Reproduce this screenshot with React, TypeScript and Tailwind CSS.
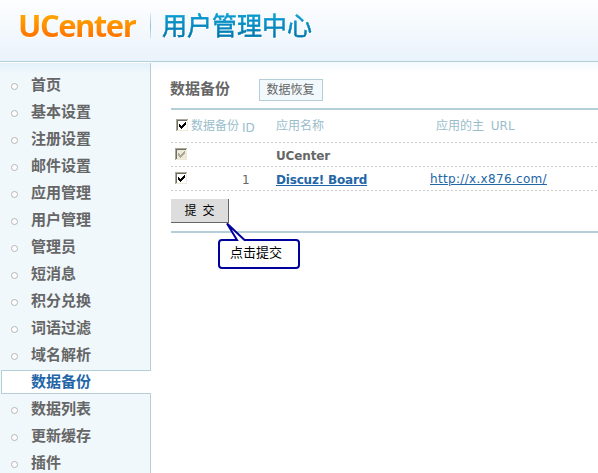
import React from "react";

const MENU = ["首页", "基本设置", "注册设置", "邮件设置", "应用管理", "用户管理", "管理员", "短消息", "积分兑换", "词语过滤", "域名解析", "数据备份", "数据列表", "更新缓存", "插件"];
const ACTIVE = "数据备份";

function Check({ disabled = false }: { disabled?: boolean }) {
  const fill = disabled ? "#ece9d8" : "#fff";
  const mark = disabled ? "#aca899" : "#000";
  return (
    <svg width="13" height="13" viewBox="0 0 13 13" shapeRendering="crispEdges" className="block shrink-0">
      <rect width="13" height="13" fill="#fff" />
      <rect width="12" height="12" fill="#aca899" />
      <rect x="1" y="1" width="11" height="11" fill="#ece9d8" />
      <rect x="1" y="1" width="10" height="10" fill="#716f64" />
      <rect x="2" y="2" width="9" height="9" fill={fill} />
      <path fill={mark} d="M3 5h1v3h-1zM4 6h1v3h-1zM5 7h1v3h-1zM6 6h1v3h-1zM7 5h1v3h-1zM8 4h1v3h-1zM9 3h1v3h-1z" />
    </svg>
  );
}

function Dashes() {
  return <div className="h-px w-full shrink-0 bg-[repeating-linear-gradient(90deg,#ccc_0_2px,transparent_2px_4px)]" />;
}

function Header() {
  return (
    <header className="flex h-[62px] shrink-0 border-b border-[#b5cfd9] bg-linear-to-b from-[#fdfeff] to-[#eaf3fb] pl-[18px]">
      <div className="h-[52px] w-[132px] pt-[5px] font-['Open_Sans',sans-serif] text-[31px] leading-[40px] font-bold tracking-[-1.5px] whitespace-nowrap text-transparent">
        <span className="inline-block bg-linear-to-b from-[#ffa200] from-30% to-[#ff7800] to-75% bg-clip-text pr-1 drop-shadow-[1px_1px_0_#fff]">UCenter</span>
      </div>
      <div className="mt-[13px] h-[26px] w-px bg-linear-to-b from-[#d9ebf3] via-[#8fc3dc] to-[#d9ebf3]" />
      <div className="ml-[11px] pt-[4px] font-['Noto_Sans_CJK_SC',sans-serif] text-[25px] leading-[40px] whitespace-nowrap text-transparent">
        <span className="inline-block bg-linear-to-b from-[#06a5d8] from-25% to-[#0673ab] to-80% bg-clip-text drop-shadow-[1px_1px_0_#fff] [-webkit-text-stroke:0.3px_#0688be]">用户管理中心</span>
      </div>
    </header>
  );
}

function Sidebar() {
  return (
    <nav className="flex w-[151px] shrink-0 flex-col gap-[3px] bg-[#f0f8fc] bg-[linear-gradient(#e3f0fa,#f0f8fc_12px)] pt-[11px] shadow-[inset_0_1px_#fff,inset_-1px_0_#b5cfd9]">
      {MENU.map((name) =>
        name === ACTIVE ? (
          <div key={name} className="ml-px flex h-6 shrink-0 items-center border border-r-0 border-[#b5cfd9] bg-white pl-[29px] text-[15px] leading-[20px] font-bold text-[#2366a8]">
            {name}
          </div>
        ) : (
          <div key={name} className="flex h-6 shrink-0 items-center pl-[11px] text-[15px] leading-[20px] font-bold text-[#666]">
            <i className="mt-[3px] mr-[13px] size-[7px] rounded-full border border-[#b4b4b4] bg-white" />
            {name}
          </div>
        ),
      )}
    </nav>
  );
}

const COLS = "grid shrink-0 grid-cols-[71px_34px_154px_168px] items-center";

export default function App() {
  return (
    <div className="flex h-[473px] w-[598px] flex-col overflow-hidden bg-white font-['DejaVu_Sans','Noto_Sans_CJK_SC',sans-serif] text-[12px] text-[#666]">
      <Header />
      <div className="flex min-h-0 flex-1">
        <Sidebar />
        <main className="relative flex min-w-0 flex-1 flex-col bg-[linear-gradient(#f4fafd,#fff_12px)] pl-5">
          <div className="flex h-[46px] shrink-0 items-start pt-[17px]">
            <h3 className="w-[88px] text-[15px] leading-[20px] font-bold"><span className="-ml-px">数据备份</span></h3>
            <button className="h-[22px] w-16 border border-[#b5cfd9] bg-[#f2f9fd] pr-px text-[12px] leading-[19px]">数据恢复</button>
          </div>
          <div className="h-[2px] shrink-0 bg-[#b5cfd9]" />
          <div className={`${COLS} h-8 text-[#9abdcb]`}>
            <div className="flex items-center pl-[5px] whitespace-nowrap"><span className="-mt-[2px]"><Check /></span><span className="ml-[2px]">数据备份</span></div>
            <div className="pt-1">ID</div>
            <div>应用名称</div>
            <div className="pl-[6px] whitespace-pre">应用的主 <span className="ml-[3px]">URL</span></div>
          </div>
          <Dashes />
          <div className={`${COLS} h-[23px]`}>
            <div className="pl-1"><Check disabled /></div>
            <div />
            <div className="pt-[2px] font-bold tracking-[-0.15px]">UCenter</div>
          </div>
          <Dashes />
          <div className={`${COLS} h-[23px]`}>
            <div className="pl-1"><Check /></div>
            <div className="pt-[3px]">1</div>
            <div className="pt-[2px] font-bold tracking-[-0.18px] text-[#2366a8] underline">Discuz! Board</div>
            <div className="tracking-[0.32px] text-[#2366a8] underline">http://x.x876.com/</div>
          </div>
          <Dashes />
          <button className="mt-2 h-6 w-[58px] shrink-0 border-r border-b border-[#666] bg-[#ddd] text-[12px] leading-[20px] text-black"><span className="[word-spacing:2px]">提 交</span></button>
          <div className="mt-2 h-[2px] shrink-0 bg-[#b5cfd9]" />
          <div className="absolute top-[160px] left-[67px] h-[48px] w-[83px]">
            <svg width="83" height="48" viewBox="0 0 83 48" className="absolute inset-0">
              <path d="M19 18 L9 1.5 L26.5 18 H78 Q81 18 81 21 V43 Q81 46 78 46 H4 Q1 46 1 43 V21 Q1 18 4 18 Z" fill="#fff" stroke="#00009c" strokeWidth="2" />
            </svg>
            <div className="relative pt-[21px] pl-[12px] text-[13px] leading-[20px] text-black">点击提交</div>
          </div>
        </main>
      </div>
    </div>
  );
}
